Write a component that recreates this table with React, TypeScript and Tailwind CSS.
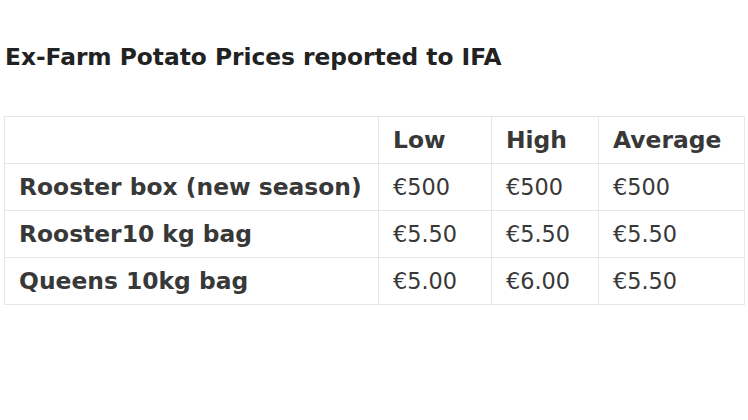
import React from "react";

const rows = [
  ["Rooster box (new season)", "€500", "€500", "€500"],
  ["Rooster10 kg bag", "€5.50", "€5.50", "€5.50"],
  ["Queens 10kg bag", "€5.00", "€6.00", "€5.50"],
];

export default function App() {
  return (
    <div className="w-[748px] h-[420px] bg-white overflow-hidden" style={{ fontFamily: '"DejaVu Sans", Verdana, sans-serif' }}>
      <div className="pt-[42px] pl-[5px] text-[23.3px] font-bold text-[#222] leading-[30px] whitespace-nowrap">
        Ex-Farm Potato Prices reported to IFA
      </div>
      <div className="pt-[44px] pl-[4px]">
        <table className="border-collapse text-[22.4px] text-[#383838] leading-[28px]">
          <thead>
            <tr className="h-[47px]">
              <th className="w-[374px] border border-[#e6e6e6] text-left px-[14px] font-bold"></th>
              <th className="w-[113px] border border-[#e6e6e6] text-left px-[14px] font-bold text-[23.4px]">Low</th>
              <th className="w-[107px] border border-[#e6e6e6] text-left px-[14px] font-bold text-[23.4px]">High</th>
              <th className="w-[146px] border border-[#e6e6e6] text-left px-[14px] font-bold text-[23.4px]">Average</th>
            </tr>
          </thead>
          <tbody>
            {rows.map((r) => (
              <tr key={r[0]} className="h-[47px]">
                <td className="border border-[#e6e6e6] px-[14px] font-bold text-[23.4px] whitespace-nowrap">{r[0]}</td>
                <td className="border border-[#e6e6e6] px-[14px]">{r[1]}</td>
                <td className="border border-[#e6e6e6] px-[14px]">{r[2]}</td>
                <td className="border border-[#e6e6e6] px-[14px]">{r[3]}</td>
              </tr>
            ))}
          </tbody>
        </table>
      </div>
    </div>
  );
}
